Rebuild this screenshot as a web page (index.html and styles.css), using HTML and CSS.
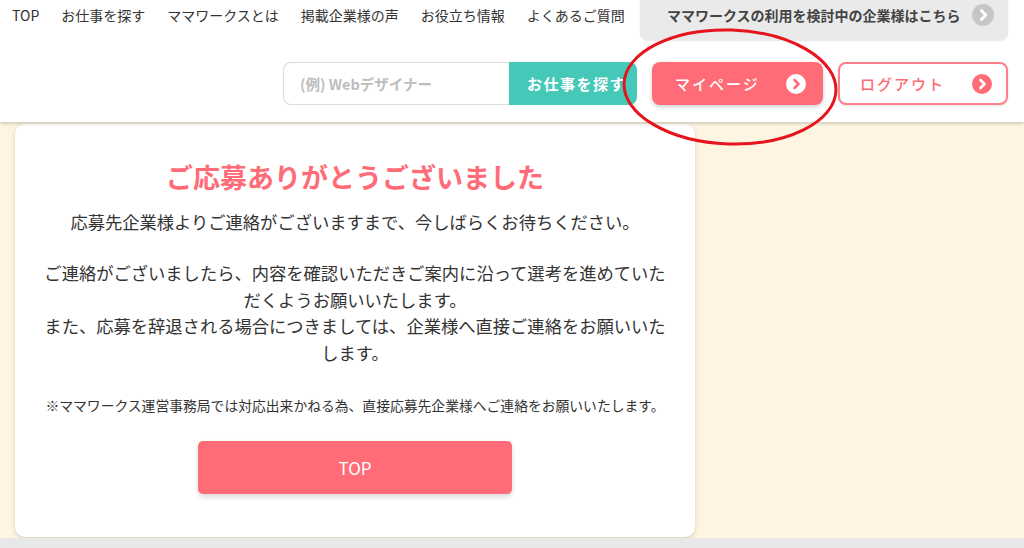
FILE: index.html
```html
<!DOCTYPE html>
<html lang="ja">
<head>
<meta charset="utf-8">
<title>ご応募ありがとうございました</title>
<link rel="stylesheet" href="styles.css">
</head>
<body>
<header class="header">
  <div class="nav-row">
    <nav class="nav">
      <a class="nav-item">TOP</a>
      <a class="nav-item">お仕事を探す</a>
      <a class="nav-item">ママワークスとは</a>
      <a class="nav-item">掲載企業様の声</a>
      <a class="nav-item">お役立ち情報</a>
      <a class="nav-item">よくあるご質問</a>
    </nav>
    <a class="corp-btn">
      <span>ママワークスの利用を検討中の企業様はこちら</span>
      <svg class="chev" width="22" height="22" viewBox="0 0 20 20"><circle cx="10" cy="10" r="10" fill="#c6c6c6"/><path d="M8.5 6 L12.5 10 L8.5 14" fill="none" stroke="#fff" stroke-width="2.6" stroke-linecap="round" stroke-linejoin="round"/></svg>
    </a>
  </div>
  <div class="action-row">
    <form class="search">
      <input class="search-input" type="text" placeholder="(例) Webデザイナー">
      <button class="search-btn" type="button">お仕事を探す</button>
    </form>
    <a class="mypage-btn">
      <span>マイページ</span>
      <svg class="chev" width="20" height="20" viewBox="0 0 20 20"><circle cx="10" cy="10" r="10" fill="#fff"/><path d="M8.5 6 L12.5 10 L8.5 14" fill="none" stroke="#ff6b77" stroke-width="2.6" stroke-linecap="round" stroke-linejoin="round"/></svg>
    </a>
    <a class="logout-btn">
      <span>ログアウト</span>
      <svg class="chev" width="20" height="20" viewBox="0 0 20 20"><circle cx="10" cy="10" r="10" fill="#ff6b77"/><path d="M8.5 6 L12.5 10 L8.5 14" fill="none" stroke="#fff" stroke-width="2.6" stroke-linecap="round" stroke-linejoin="round"/></svg>
    </a>
  </div>
</header>
<main class="main">
  <section class="card">
    <h1 class="title">ご応募ありがとうございました</h1>
    <p class="text">応募先企業様よりご連絡がございますまで、今しばらくお待ちください。</p>
    <p class="text text-gap">ご連絡がございましたら、内容を確認いただきご案内に沿って選考を進めていただくようお願いいたします。<br>また、応募を辞退される場合につきましては、企業様へ直接ご連絡をお願いいたします。</p>
    <p class="note">※ママワークス運営事務局では対応出来かねる為、直接応募先企業様へご連絡をお願いいたします。</p>
    <a class="top-btn">TOP</a>
  </section>
</main>
<footer class="footer"></footer>
<svg class="annotation" width="240" height="140" viewBox="0 0 240 140">
  <ellipse cx="118" cy="67" rx="106" ry="57" fill="none" stroke="#e5141d" stroke-width="3" transform="rotate(2 118 67)"/>
</svg>
</body>
</html>
```

FILE: styles.css
```css
* { box-sizing: border-box; }
html, body { margin: 0; padding: 0; }
body {
  width: 1024px;
  height: 548px;
  overflow: hidden;
  background: #fdf4e1;
  font-family: "Noto Sans CJK JP", "Noto Sans", sans-serif;
  color: #333;
  position: relative;
}
a { text-decoration: none; color: inherit; }

.header {
  background: #fff;
  height: 122px;
  box-shadow: 0 2px 3px rgba(0,0,0,0.16);
  position: relative;
  z-index: 2;
}
.nav-row {
  display: flex;
  align-items: flex-start;
  padding: 0 16px 0 12px;
  height: 40px;
}
.nav {
  display: flex;
  gap: 22px;
}
.nav-item {
  font-size: 14px;
  line-height: 30px;
  color: #333;
  white-space: nowrap;
}
.corp-btn {
  margin-left: auto;
  width: 368px;
  height: 40px;
  background: #eaeaea;
  border-radius: 0 0 8px 8px;
  box-shadow: 0 1px 2px rgba(0,0,0,0.1);
  display: flex;
  align-items: center;
  padding: 0 14px 10px 27px;
  font-size: 14px;
  font-weight: 700;
  color: #444;
  white-space: nowrap;
}
.corp-btn span { flex: 1; }
.chev { display: block; flex: none; }

.action-row {
  display: flex;
  justify-content: flex-end;
  align-items: center;
  gap: 15px;
  padding: 22px 16px 0 0;
}
.search {
  display: flex;
  margin: 0;
  height: 43px;
}
.search-input {
  width: 226px;
  height: 43px;
  border: 1px solid #dcdcdc;
  border-right: none;
  border-radius: 8px 0 0 8px;
  padding: 0 16px;
  font-family: inherit;
  font-size: 14.5px;
  font-weight: 700;
  outline: none;
  background: #fff;
}
.search-input::placeholder { color: #bdbdbd; }
.search-btn {
  width: 128px;
  height: 43px;
  border: none;
  border-radius: 0 8px 8px 0;
  background: #45c8b8;
  color: #fff;
  font-family: inherit;
  font-size: 15px;
  font-weight: 700;
  letter-spacing: 1.5px;
  text-align: left;
  padding: 0 0 0 18px;
}
.mypage-btn, .logout-btn {
  width: 171px;
  height: 43px;
  border-radius: 8px;
  display: flex;
  align-items: center;
  justify-content: space-between;
  padding: 0 17px 0 23px;
  font-size: 15px;
  font-weight: 500;
  letter-spacing: 2px;
}
.mypage-btn {
  background: #ff6b77;
  color: #fff;
  box-shadow: 0 2px 4px rgba(0,0,0,0.18);
}
.logout-btn {
  width: 170px;
  background: #fff;
  color: #ff6b77;
  border: 2px solid #ff7f89;
  padding: 0 14px 0 20px;
  box-shadow: 0 1px 3px rgba(0,0,0,0.12);
}

.main {
  padding: 2px 0 0 15px;
}
.card {
  width: 680px;
  height: 413px;
  background: #fff;
  border-radius: 10px;
  box-shadow: 0 2px 5px rgba(0,0,0,0.15);
  padding: 35px 26px 0;
  text-align: center;
  display: flex;
  flex-direction: column;
  align-items: center;
}
.title {
  margin: 0;
  font-size: 27px;
  line-height: 36px;
  font-weight: 700;
  color: #ff6b77;
}
.text {
  margin: 14px 0 0;
  font-size: 17.3px;
  line-height: 26.5px;
  color: #333;
}
.text-gap { margin-top: 24.5px; }
.note {
  margin: 29px 0 0;
  font-size: 13.8px;
  line-height: 20px;
  color: #333;
  white-space: nowrap;
}
.top-btn {
  margin-top: 26px;
  width: 314px;
  height: 53px;
  background: #ff6b77;
  color: #fff;
  border-radius: 5px;
  box-shadow: 0 3px 5px rgba(0,0,0,0.15);
  display: flex;
  align-items: center;
  justify-content: center;
  font-size: 17px;
}
.footer {
  position: absolute;
  left: 0;
  right: 0;
  top: 538px;
  height: 10px;
  background: #e8e8e8;
}
.annotation {
  position: absolute;
  left: 612px;
  top: 20px;
  z-index: 5;
  pointer-events: none;
}
```
